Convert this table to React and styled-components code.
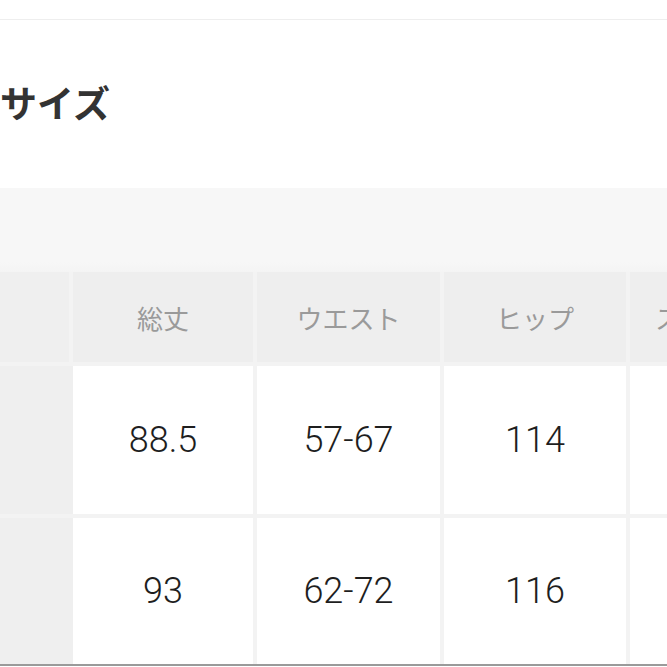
import React from "react";
import styled, { createGlobalStyle } from "styled-components";

const headers = ["総丈", "ウエスト", "ヒップ", "スカート丈"];
const rows = [
    ["88.5", "57-67", "114", ""],
    ["93", "62-72", "116", ""],
];

export default function App() {
    return (
        <Page>
            <GlobalStyle />
            <TopBar />
            <TitleBlock>
                <Title>サイズ</Title>
            </TitleBlock>
            <Band />
            <Table>
                <SideCell $head />
                {headers.map((h) => (
                    <HeadCell key={h}>{h}</HeadCell>
                ))}
                {rows.map((row, i) => (
                    <React.Fragment key={i}>
                        <SideCell />
                        {row.map((v, j) => (
                            <DataCell key={j}>{v}</DataCell>
                        ))}
                    </React.Fragment>
                ))}
            </Table>
            <BottomLine />
        </Page>
    );
}

const GlobalStyle = createGlobalStyle`
    html, body {
        margin: 0;
        padding: 0;
        background: #ffffff;
    }
    body {
        font-family: "Noto Sans CJK JP", "Noto Sans", sans-serif;
        overflow: hidden;
    }
`;

const Page = styled.div`
    width: 667px;
    height: 667px;
    overflow: hidden;
    display: flex;
    flex-direction: column;
    background: #ffffff;
`;

const TopBar = styled.div`
    height: 19px;
    flex-shrink: 0;
    border-bottom: 1px solid #eeeeee;
`;

const TitleBlock = styled.div`
    height: 168px;
    flex-shrink: 0;
    display: flex;
    align-items: center;
    padding-bottom: 4px;
    box-sizing: border-box;
`;

const Title = styled.h2`
    margin: 0;
    font-size: 37px;
    font-weight: 700;
    color: #333333;
    line-height: 1;
`;

const Band = styled.div`
    height: 84px;
    flex-shrink: 0;
    background: linear-gradient(#f7f7f7 0%, #f7f7f7 88%, #f4f4f4 100%);
`;

const Table = styled.div`
    display: grid;
    grid-template-columns: 69px 180px 183px 182px 180px;
    grid-template-rows: 90px 148px 146px;
    gap: 4px;
    background: #f3f3f3;
    flex-shrink: 0;
`;

const SideCell = styled.div`
    background: #efefef;
    margin-right: ${(p) => (p.$head ? "0" : "-4px")};
`;

const HeadCell = styled.div`
    display: flex;
    align-items: center;
    justify-content: center;
    background: #eeeeee;
    color: #9a9a9a;
    font-size: 26px;
    font-family: "Noto Sans CJK JP", sans-serif;
    white-space: nowrap;
    overflow: hidden;
`;

const DataCell = styled.div`
    display: flex;
    align-items: center;
    justify-content: center;
    background: #ffffff;
    color: #1e1e1e;
    font-family: Roboto, "Liberation Sans", sans-serif;
    font-size: 36px;
    font-weight: 300;
`;

const BottomLine = styled.div`
    height: 2px;
    background: #9a9a9a;
    flex-shrink: 0;
`;
